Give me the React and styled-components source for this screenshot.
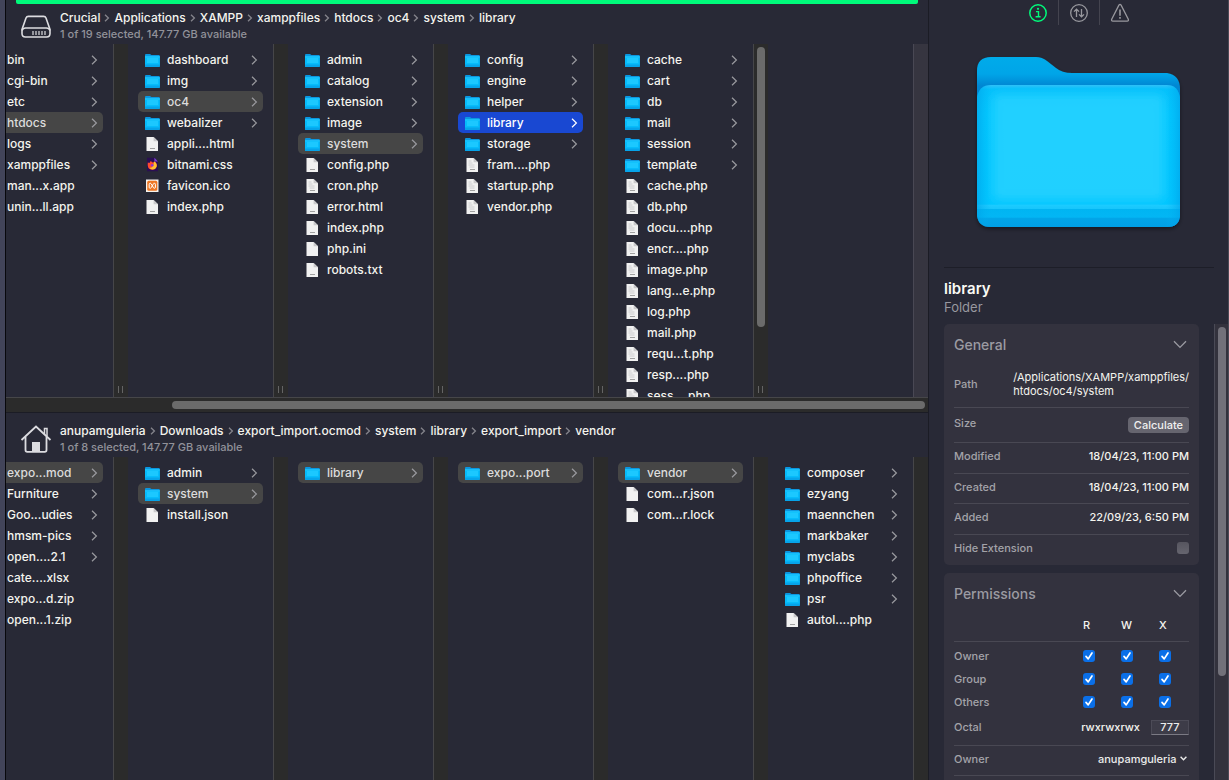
import styled, { createGlobalStyle, css } from "styled-components";

const GlobalStyle = createGlobalStyle`
  * {
    box-sizing: border-box;
  }
  body {
    margin: 0;
    background-color: #282936;
    color: #f4f4ee;
    font-family: Inter, "Liberation Sans", sans-serif;
    font-size: 12px;
    font-weight: 500;
  }
`;

const Window = styled.div`
  display: flex;
  height: 100vh;
  overflow: hidden;
  border-left: 5px solid #424459;
`;

const Browser = styled.main`
  flex: 1;
  min-width: 0;
  display: flex;
  flex-direction: column;
  border-left: 1px solid #08080c;
  border-right: 1px solid #1b1c25;
`;

const Pane = styled.section`
  flex: ${(props) => props.$share} 1 0;
  min-height: 0;
  display: flex;
  flex-direction: column;
`;

const ActiveBar = styled.div`
  height: 4px;
  margin: 0 10px;
  background-color: #00fa7b;
  border-radius: 0 0 2px 2px;
`;

const PaneHeader = styled.header`
  display: flex;
  align-items: center;
  gap: 8px;
  height: ${(props) => (props.$active ? "40px" : "44px")};
  padding: ${(props) => (props.$active ? "4px 14px 0" : "8px 14px 0")};
`;

const HeaderText = styled.div`
  display: flex;
  flex-direction: column;
`;

const Crumbs = styled.nav`
  display: flex;
  align-items: center;
  gap: 4px;
  line-height: 16px;
  a {
    color: inherit;
    text-decoration: none;
  }
`;

const Status = styled.p`
  margin: 0;
  font-size: 11px;
  line-height: 16px;
  color: #92929a;
`;

const Columns = styled.div`
  flex: 1;
  min-height: 0;
  display: flex;
  justify-content: flex-end;
  overflow: hidden;
`;

const Column = styled.div`
  flex: 0 0 160px;
  display: flex;
  overflow: hidden;
`;

const List = styled.ul`
  flex: 1;
  min-width: 0;
  margin: 0;
  padding: 5px 10px;
  list-style: none;
`;

const Gutter = styled.div`
  width: 15px;
  display: flex;
  flex-direction: column;
  align-items: center;
  justify-content: space-between;
  padding: 3px 0 4px;
  border-left: 1px solid ${(props) => (props.$empty ? "#494854" : "#464649")};
  background-color: ${(props) => (props.$empty ? "#363540" : "#2b2b2b")};
`;

const Grip = styled.span`
  width: 5px;
  height: 7px;
  margin: auto 2px 0 0;
  border: solid #646464;
  border-width: 0 1px;
`;

const Thumb = styled.div`
  width: 8px;
  height: ${(props) => props.$size};
  border-radius: 4px;
  background-color: ${(props) => props.$color || "#6b6b6b"};
`;

const Row = styled.li`
  display: flex;
  align-items: center;
  gap: 7px;
  height: 21px;
  padding: 0 5px 0 7px;
  border-radius: 5px;
  white-space: nowrap;
  ${(props) =>
    props.$state === "open" &&
    css`
      background-color: #464646;
      color: #dcdcdc;
    `}
  ${(props) =>
    props.$state === "active" &&
    css`
      background-color: #1948d2;
      color: #fff;
      --arrow: #fff;
    `}
`;

const RowName = styled.span`
  flex: 1;
`;

const HScroll = styled.div`
  height: 16px;
  padding: 3px 3px 4px 18%;
  border-top: 1px solid #464649;
  border-bottom: 1px solid #1b1c25;
  background-color: #2b2b2b;
`;

const HThumb = styled.div`
  height: 8px;
  border-radius: 4px;
  background-color: #6b6b6b;
`;

const Inspector = styled.aside`
  flex: 0 0 300px;
  min-width: 0;
  display: flex;
  flex-direction: column;
  border-right: 1px solid #4a4a56;
`;

const Modes = styled.div`
  display: flex;
  justify-content: center;
  height: 25px;
`;

const ModeButton = styled.button`
  width: 41px;
  padding: 1px 0 0;
  border: 0;
  background: none;
  line-height: 0;
  color: ${(props) => (props.$on ? "#00fa7b" : "#98989e")};
  & + & {
    border-left: 1px solid #44444f;
  }
`;

const Preview = styled.div`
  display: flex;
  justify-content: center;
  height: 243px;
  padding-top: 27px;
  margin: 0 14px 0 15px;
  border-bottom: 1px solid #1d1e28;
`;

const Title = styled.h1`
  margin: 12px 15px 0;
  font-size: 15px;
  line-height: 18px;
  font-weight: 600;
  color: #fafaf4;
`;

const Kind = styled.p`
  margin: 0 15px 8px;
  font-size: 13px;
  line-height: 18px;
  font-weight: 400;
  color: #98989f;
`;

const Details = styled.div`
  flex: 1;
  min-height: 0;
  display: flex;
  overflow: hidden;
`;

const Cards = styled.div`
  flex: 1;
  min-width: 0;
  display: flex;
  flex-direction: column;
  gap: 8px;
  padding: 0 15px;
`;

const Track = styled.div`
  width: 14px;
  padding: 3px 2px 0 3px;
  border-left: 1px solid #4a4a56;
  background-color: #33323d;
`;

const Card = styled.section`
  flex-shrink: 0;
  padding: 0 10px ${(props) => (props.$roomy ? "10px" : "0")};
  border-radius: 5px;
  background-color: #33323e;
  font-size: 11px;
`;

const CardTitle = styled.h2`
  display: flex;
  align-items: center;
  justify-content: space-between;
  height: 40px;
  margin: 0;
  padding-right: 2px;
  font-size: 14px;
  font-weight: 500;
  color: #9b9ba2;
`;

const Field = styled.div`
  display: flex;
  align-items: center;
  justify-content: space-between;
  height: ${(props) => props.$height || 30}px;
  padding-bottom: 4px;
  border-bottom: ${(props) => (props.$last ? "0" : "1px solid #494853")};
`;

const Label = styled.label`
  color: #a3a3a9;
`;

const PathText = styled.span`
  font-weight: 400;
  line-height: 14px;
`;

const CalcButton = styled.button`
  height: 16px;
  margin-top: 4px;
  padding: 0 6px;
  border: 0;
  border-radius: 4px;
  background-color: #66656f;
  color: #f0f0f0;
  font: inherit;
  line-height: 16px;
`;

const CheckBox = styled.input.attrs({ type: "checkbox" })`
  appearance: none;
  display: block;
  width: 12px;
  height: 12px;
  margin: 0;
  border-radius: 3px;
  background: linear-gradient(#56555f, #66656f);
  &:checked {
    background: #0a6fe8
      url("data:image/svg+xml,%3Csvg xmlns='http://www.w3.org/2000/svg' viewBox='0 0 12 12'%3E%3Cpath d='M3 6.4l2.2 2.5L9 3' fill='none' stroke='white' stroke-width='1.7' stroke-linecap='round' stroke-linejoin='round'/%3E%3C/svg%3E");
  }
`;

const RightsTable = styled.table`
  width: 100%;
  border-collapse: collapse;
  table-layout: fixed;
  th,
  td {
    width: 38px;
    height: 23px;
    padding: 0;
    font-weight: 500;
    text-align: left;
  }
  th:first-child {
    width: 129px;
    color: #a3a3a9;
  }
  th:last-child {
    width: auto;
  }
  thead th {
    height: 28px;
    padding-bottom: 4px;
  }
  thead tr {
    border-bottom: 1px solid #494853;
  }
  tbody tr:first-child > * {
    height: 26px;
    padding-top: 3px;
  }
`;

const OctalValue = styled.span`
  margin-left: auto;
  margin-right: 11px;
`;

const OctalInput = styled.input`
  width: 38px;
  height: 15px;
  padding: 0;
  border: 1px solid #4c4b57;
  border-bottom-color: #7b7a84;
  background-color: #3d3c48;
  color: #ececec;
  font: inherit;
  text-align: center;
`;

const SelectWrap = styled.div`
  display: flex;
  align-items: center;
  gap: 3px;
  padding-right: 2px;
`;

const OwnerSelect = styled.select`
  appearance: none;
  border: 0;
  padding: 0;
  background: none;
  color: #ececec;
  font: inherit;
`;

const Arrow = () => (
  <svg width="7" height="12" viewBox="0 0 7 12" fill="none">
    <path d="M1 1.8 5.4 6 1 10.2" stroke="var(--arrow, #9a9a9f)" strokeWidth="1.2" />
  </svg>
);

const CrumbArrow = () => (
  <svg width="6" height="8" viewBox="0 0 6 8" fill="none">
    <path d="M1 .8 4.4 4 1 7.2" stroke="#85858c" strokeWidth="1.3" />
  </svg>
);

const FolderIcon = () => (
  <svg width="15" height="15" viewBox="0 0 15 15">
    <path d="M0 3Q0 2 1 2H5l1.4 1H13.8q1 0 1 1v9H0Z" fill="#0b97e0" />
    <path d="M0 4.4H14.8V14q0 1-1 1H1q-1 0-1-1Z" fill="#06bcfb" />
    <path d="M0 4.4H14.8V5.4H0Z" fill="#26ccff" />
    <path d="M2 6h11v5H2z" fill="#1cc8ff" />
    <path d="M0 12.6H14.8V14q0 1-1 1H1q-1 0-1-1Z" fill="#06a4ea" />
  </svg>
);

const DocIcon = ({ kind }) => (
  <svg width="15" height="15" viewBox="0 0 15 15">
    <path d="M1.500 1H8.600L13 5.200V15H1.500Z" fill="#f1f1f1" />
    <path d="M8.600 1 13 5.200H8.600Z" fill="#c9c9cb" />
    {kind === "text" && (
      <path d="M3.500 4h3M3.500 6h4M3.500 8h6M4.500 10h5" stroke="#c4c4c6" strokeWidth=".8" />
    )}
    {kind !== "blank" && <path d="M5 12.500h5" stroke="#a0a0a0" strokeWidth="1" />}
  </svg>
);

const FirefoxIcon = () => (
  <svg width="15" height="15" viewBox="0 0 15 15">
    <path d="M2 .8H9.4L13 4.4v9.8H2Z" fill="#2a0f52" />
    <path d="M9.4.8 13 4.4H9.4Z" fill="#7a3ed0" />
    <path d="M2.800 5.400l1.600.6 1.400-2 1.800 1.600 2.800-.6q2.200 3 .8 5.400-1.400 2.400-4 2.400-3.200 0-4.200-2.800-.5-2-.2-4.600Z" fill="#ff4a2f" />
    <path d="M9 4.200q3.600 2.400 2.600 5.600-.8 2.600-3.800 2.800-2.400 0-3.400-1.800 4.400.4 4.600-6.600Z" fill="#ffbe2e" />
    <circle cx="7.200" cy="8.200" r="1.300" fill="#8b36d8" />
  </svg>
);

const XamppIcon = () => (
  <svg width="15" height="15" viewBox="0 0 15 15">
    <path d="M1 1.5H13.5V14H1Z" fill="#f7f3ee" />
    <rect x="2.2" y="2.7" width="10.1" height="10.1" rx="1.5" fill="#ee7623" />
    <path
      d="M6 5.3H5.2a1 1 0 0 0-1 1v3a1 1 0 0 0 1 1h.6M8.6 5.3h.8a1 1 0 0 1 1 1v3a1 1 0 0 1-1 1h-.6M6 5.6l2.6 4.3M8.6 5.6 6 9.9"
      fill="none"
      stroke="#fff"
    />
  </svg>
);

const DriveIcon = () => (
  <svg width="32" height="28" viewBox="0 0 32 28" fill="none" stroke="#dcdce0" strokeWidth="1.6">
    <path d="M8.4 4.4h15.2q1.8 0 2.4 1.6l4 11.4v4.2q0 3.4-3.4 3.4H5.4Q2 25 2 21.600v-4.200L6 6q.6-1.600 2.400-1.600Z" />
    <path d="M2 18.500q1-2.500 3.600-2.500h20.800q2.600 0 3.600 2.500" />
    <path d="M13 19v4M16 19v4M19 19v4M22 19v4M25 19v4" strokeWidth="1.200" />
  </svg>
);

const HomeIcon = () => (
  <svg width="32" height="28" viewBox="0 0 32 28" fill="none" stroke="#dcdce0" strokeWidth="1.800">
    <path d="M1.500 15 16 1.500 30.500 15" />
    <path d="M5.500 12v13q0 1.800 1.800 1.800h17.400q1.800 0 1.800-1.800V12" />
    <path d="M24.500 9V3.500h2.500V11" strokeWidth="1.500" />
    <path d="M12 17h8v10h-8Z" fill="#dcdce0" stroke="none" />
  </svg>
);

const InfoIcon = () => (
  <svg width="20" height="20" viewBox="0 0 20 20" fill="none" stroke="currentColor" strokeWidth="1.500">
    <circle cx="10" cy="10" r="8.200" />
    <path d="M8 8.600h2.500v5M7.600 13.800h5" strokeWidth="1.400" />
    <circle cx="10" cy="5.800" r="1.100" fill="currentColor" stroke="none" />
  </svg>
);

const TransferIcon = () => (
  <svg width="20" height="20" viewBox="0 0 20 20" fill="none" stroke="currentColor" strokeWidth="1.300">
    <circle cx="10" cy="10" r="8.300" />
    <path d="M7.500 14V6.200M5 8.600l2.500-2.500L10 8.600M12.500 6v7.800M10 11.400l2.500 2.500 2.500-2.500" />
  </svg>
);

const WarningIcon = () => (
  <svg width="20" height="20" viewBox="0 0 20 20" fill="none" stroke="currentColor" strokeWidth="1.300">
    <path d="M8.900 2.200q1.100-1.600 2.200 0l7.200 14q.6 1.800-1.200 1.900H2.900q-1.800-.1-1.200-1.900Z" />
    <path d="M10 6.500v6.300M10 14v1.700" strokeWidth="1.600" />
  </svg>
);

const Chevron = () => (
  <svg width="14" height="9" viewBox="0 0 14 9" fill="none">
    <path d="M1 1.200 7 7.400l6-6.200" stroke="#9b9ba2" strokeWidth="1.300" />
  </svg>
);

const SmallChevron = () => (
  <svg width="7" height="5" viewBox="0 0 7 5" fill="none">
    <path d="M.6.800 3.500 3.800 6.400.800" stroke="#ececec" strokeWidth="1.400" />
  </svg>
);

const BigFolder = () => (
  <svg width="216" height="184" viewBox="0 0 216 184">
    <defs>
      <linearGradient id="back" x1="0" y1="0" x2="0" y2="1">
        <stop offset="0" stopColor="#04abea" />
        <stop offset=".1" stopColor="#03a5e8" />
        <stop offset=".17" stopColor="#0286d2" />
      </linearGradient>
      <linearGradient id="front" x1="0" y1="0" x2="0" y2="1">
        <stop offset="0" stopColor="#30bff8" />
        <stop offset=".03" stopColor="#05c0fb" />
        <stop offset=".2" stopColor="#04c8ff" />
        <stop offset=".84" stopColor="#02c6ff" />
        <stop offset=".845" stopColor="#1fcbff" />
        <stop offset=".87" stopColor="#18c6fc" />
        <stop offset=".875" stopColor="#00b5f2" />
        <stop offset=".93" stopColor="#03b6f4" />
        <stop offset=".94" stopColor="#02a5e8" />
        <stop offset="1" stopColor="#019fe5" />
      </linearGradient>
      <linearGradient id="edge" x1="0" y1="0" x2="1" y2="0">
        <stop offset="0" stopColor="#009fe6" stopOpacity=".6" />
        <stop offset=".07" stopColor="#00b4f4" stopOpacity="0" />
        <stop offset=".93" stopColor="#00b4f4" stopOpacity="0" />
        <stop offset="1" stopColor="#009fe6" stopOpacity=".6" />
      </linearGradient>
      <filter id="glow" x="-20%" y="-20%" width="140%" height="140%">
        <feGaussianBlur stdDeviation="5" />
      </filter>
      <filter id="drop" x="-10%" y="-10%" width="120%" height="120%">
        <feDropShadow dx="0" dy="2" stdDeviation="2" floodColor="#000" floodOpacity=".45" />
      </filter>
    </defs>
    <path
      filter="url(#drop)"
      fill="url(#back)"
      d="M6 19Q6 5 20 5H65Q71 5 76 9L85 16Q91 21 101 21H196Q209 23 209 37V162Q209 175 196 175H20Q6 175 6 161Z"
    />
    <path fill="url(#front)" d="M6 46Q8 33 20 33H196Q207 33 209 46V162Q209 175 196 175H20Q6 175 6 161Z" />
    <rect x="22" y="42" width="171" height="106" rx="6" fill="#26d0ff" fillOpacity=".9" filter="url(#glow)" />
    <path fill="url(#edge)" d="M6 46Q8 33 20 33H196Q207 33 209 46V162Q209 175 196 175H20Q6 175 6 161Z" />
  </svg>
);

const icons = {
  folder: <FolderIcon />,
  code: <DocIcon kind="text" />,
  plain: <DocIcon kind="plain" />,
  blank: <DocIcon kind="blank" />,
  firefox: <FirefoxIcon />,
  xampp: <XamppIcon />,
};

const folders = (...names) => names.map((name) => ({ name, icon: "folder" }));
const files = (icon, ...names) => names.map((name) => ({ name, icon }));

const topColumns = [
  {
    open: "htdocs",
    items: [
      ...folders("bin", "cgi-bin", "etc", "htdocs", "logs", "xamppfiles"),
      ...files("blank", "man...x.app", "unin...ll.app"),
    ],
  },
  {
    open: "oc4",
    items: [
      ...folders("dashboard", "img", "oc4", "webalizer"),
      ...files("plain", "appli....html"),
      ...files("firefox", "bitnami.css"),
      ...files("xampp", "favicon.ico"),
      ...files("plain", "index.php"),
    ],
  },
  {
    open: "system",
    items: [
      ...folders("admin", "catalog", "extension", "image", "system"),
      ...files("plain", "config.php"),
      ...files("code", "cron.php"),
      ...files("plain", "error.html", "index.php"),
      ...files("blank", "php.ini"),
      ...files("plain", "robots.txt"),
    ],
  },
  {
    active: "library",
    items: [
      ...folders("config", "engine", "helper", "library", "storage"),
      ...files("code", "fram....php", "startup.php", "vendor.php"),
    ],
  },
  {
    scroll: true,
    items: [
      ...folders("cache", "cart", "db", "mail", "session", "template"),
      ...files(
        "code",
        "cache.php",
        "db.php",
        "docu....php",
        "encr....php",
        "image.php",
        "lang...e.php",
        "log.php",
        "mail.php",
        "requ...t.php",
        "resp....php",
        "sess....php"
      ),
    ],
  },
  { empty: true, items: [] },
];

const bottomColumns = [
  {
    open: "expo...mod",
    items: [
      ...folders("expo...mod", "Furniture", "Goo...udies", "hmsm-pics", "open....2.1"),
      ...files("blank", "cate....xlsx", "expo...d.zip", "open...1.zip"),
    ],
  },
  {
    open: "system",
    items: [...folders("admin", "system"), ...files("blank", "install.json")],
  },
  { open: "library", items: folders("library") },
  { open: "expo...port", items: folders("expo...port") },
  {
    open: "vendor",
    items: [...folders("vendor"), ...files("blank", "com...r.json", "com...r.lock")],
  },
  {
    items: [
      ...folders("composer", "ezyang", "maennchen", "markbaker", "myclabs", "phpoffice", "psr"),
      ...files("plain", "autol....php"),
    ],
  },
];

const rowState = (column, name) => {
  if (column.active === name) return "active";
  if (column.open === name) return "open";
  return "none";
};

const Breadcrumbs = ({ path }) => (
  <Crumbs>
    {path.map((part, i) => [
      i > 0 && <CrumbArrow key={`arrow-${part}`} />,
      <a key={part} href="#">
        {part}
      </a>,
    ])}
  </Crumbs>
);

const ColumnView = ({ columns, grips }) => (
  <Columns>
    {columns.map((column, i) => (
      <Column key={i}>
        <List>
          {column.items.map((item) => (
            <Row key={item.name} $state={rowState(column, item.name)}>
              {icons[item.icon]}
              <RowName>{item.name}</RowName>
              {item.icon === "folder" && <Arrow />}
            </Row>
          ))}
        </List>
        <Gutter $empty={column.empty}>
          {column.scroll && <Thumb $size="81%" />}
          {grips && !column.empty && <Grip />}
        </Gutter>
      </Column>
    ))}
  </Columns>
);

const General = () => (
  <Card>
    <CardTitle>
      General
      <Chevron />
    </CardTitle>
    <Field $height={44}>
      <Label as="span">Path</Label>
      <PathText>
        /Applications/XAMPP/xamppfiles/
        <br />
        htdocs/oc4/system
      </PathText>
    </Field>
    <Field $height={35}>
      <Label as="span">Size</Label>
      <CalcButton type="button">Calculate</CalcButton>
    </Field>
    <Field $height={31}>
      <Label as="span">Modified</Label>
      <span>18/04/23, 11:00 PM</span>
    </Field>
    <Field>
      <Label as="span">Created</Label>
      <span>18/04/23, 11:00 PM</span>
    </Field>
    <Field $height={31}>
      <Label as="span">Added</Label>
      <span>22/09/23, 6:50 PM</span>
    </Field>
    <Field $last>
      <Label htmlFor="hide">Hide Extension</Label>
      <CheckBox id="hide" />
    </Field>
  </Card>
);

const Permissions = () => (
  <Card $roomy>
    <CardTitle>
      Permissions
      <Chevron />
    </CardTitle>
    <RightsTable>
      <thead>
        <tr>
          <th />
          <th>R</th>
          <th>W</th>
          <th>X</th>
        </tr>
      </thead>
      <tbody>
        {["Owner", "Group", "Others"].map((who) => (
          <tr key={who}>
            <th>{who}</th>
            {["read", "write", "execute"].map((right) => (
              <td key={right}>
                <CheckBox defaultChecked aria-label={`${who} ${right}`} />
              </td>
            ))}
          </tr>
        ))}
      </tbody>
    </RightsTable>
    <Field $height={33}>
      <Label htmlFor="octal">Octal</Label>
      <OctalValue>rwxrwxrwx</OctalValue>
      <OctalInput id="octal" defaultValue="777" />
    </Field>
    <Field>
      <Label htmlFor="owner">Owner</Label>
      <SelectWrap>
        <OwnerSelect id="owner">
          <option>anupamguleria</option>
        </OwnerSelect>
        <SmallChevron />
      </SelectWrap>
    </Field>
  </Card>
);

const App = () => {
  return (
    <>
      <GlobalStyle />
      <Window>
        <Browser>
          <Pane $share={413}>
            <ActiveBar />
            <PaneHeader $active>
              <DriveIcon />
              <HeaderText>
                <Breadcrumbs
                  path={["Crucial", "Applications", "XAMPP", "xamppfiles", "htdocs", "oc4", "system", "library"]}
                />
                <Status>1 of 19 selected, 147.77 GB available</Status>
              </HeaderText>
            </PaneHeader>
            <ColumnView columns={topColumns} grips />
            <HScroll>
              <HThumb />
            </HScroll>
          </Pane>
          <Pane $share={367}>
            <PaneHeader>
              <HomeIcon />
              <HeaderText>
                <Breadcrumbs
                  path={[
                    "anupamguleria",
                    "Downloads",
                    "export_import.ocmod",
                    "system",
                    "library",
                    "export_import",
                    "vendor",
                  ]}
                />
                <Status>1 of 8 selected, 147.77 GB available</Status>
              </HeaderText>
            </PaneHeader>
            <ColumnView columns={bottomColumns} />
          </Pane>
        </Browser>
        <Inspector>
          <Modes>
            <ModeButton type="button" aria-label="Info" $on>
              <InfoIcon />
            </ModeButton>
            <ModeButton type="button" aria-label="Transfers">
              <TransferIcon />
            </ModeButton>
            <ModeButton type="button" aria-label="Warnings">
              <WarningIcon />
            </ModeButton>
          </Modes>
          <Preview>
            <BigFolder />
          </Preview>
          <Title>library</Title>
          <Kind>Folder</Kind>
          <Details>
            <Cards>
              <General />
              <Permissions />
            </Cards>
            <Track>
              <Thumb $size="77%" $color="#72717a" />
            </Track>
          </Details>
        </Inspector>
      </Window>
    </>
  );
};

export default App;
